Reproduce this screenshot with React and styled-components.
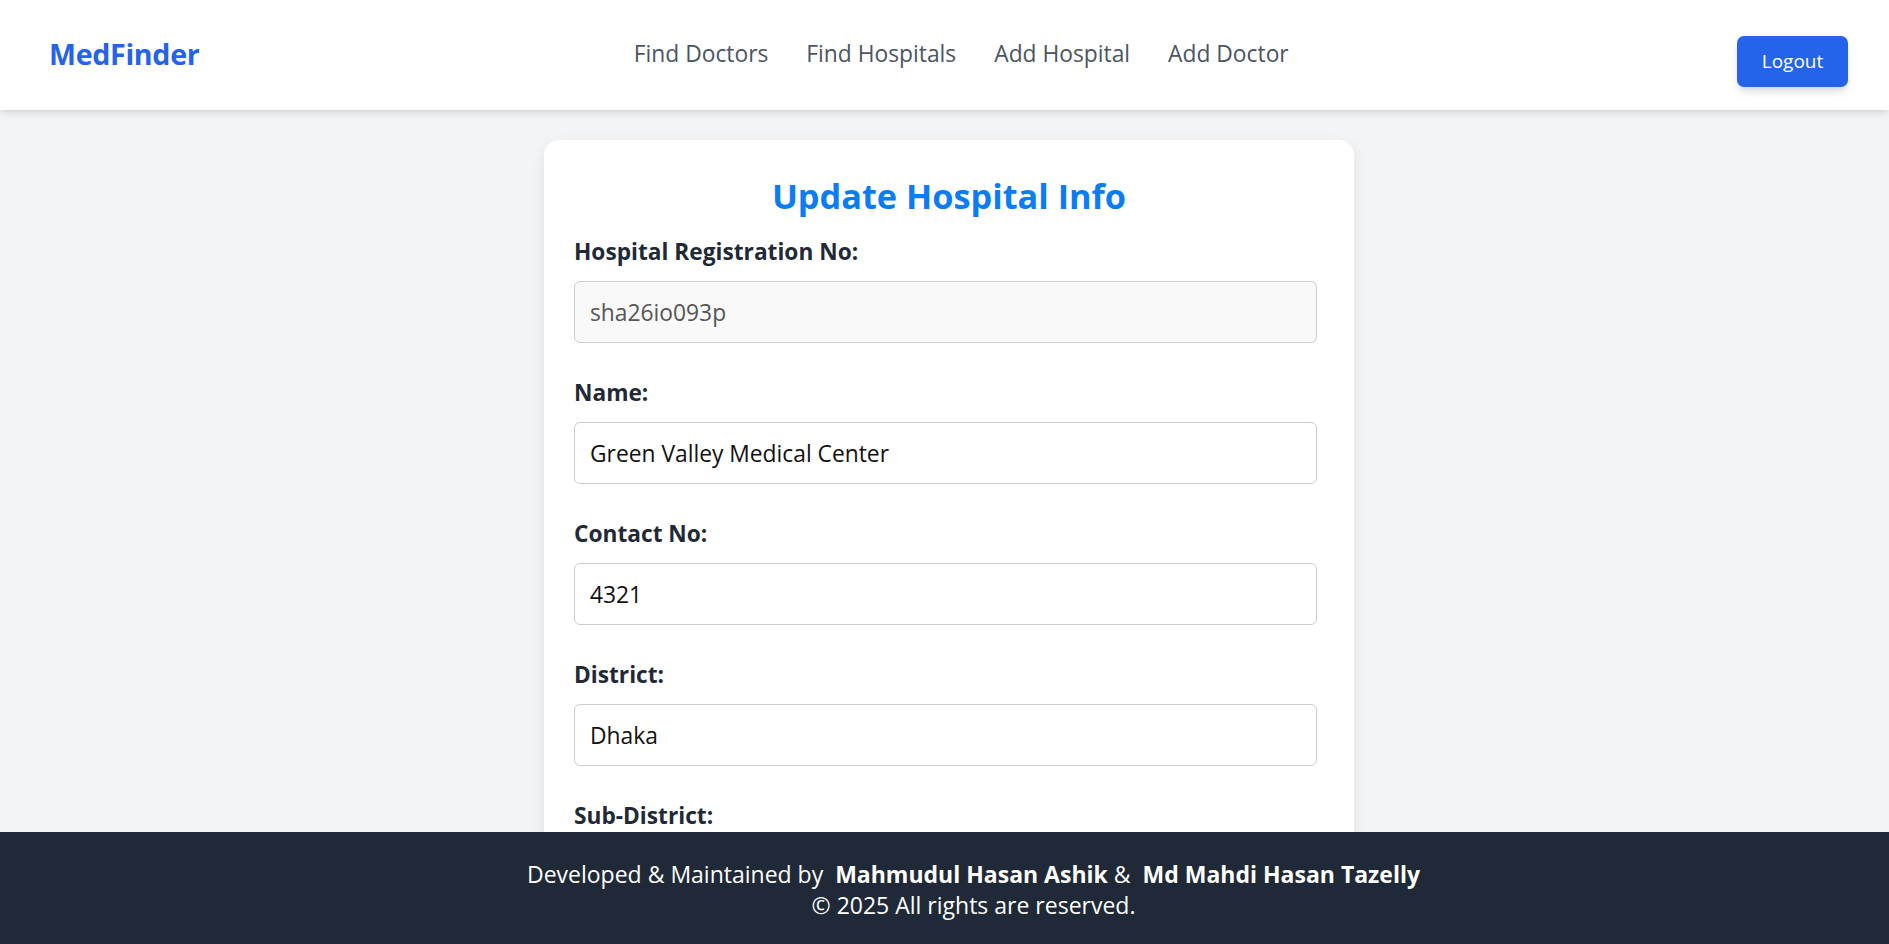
import React from "react";
import styled, { createGlobalStyle } from "styled-components";

const GlobalStyle = createGlobalStyle`
  *, *::before, *::after { box-sizing: border-box; }
  html, body { margin: 0; padding: 0; height: 100%; }
  body {
    font-family: "Open Sans", "Noto Sans", "Liberation Sans", sans-serif;
    background: #f3f4f6;
    color: #1f2937;
  }
  #root { height: 100%; }
`;

const Page = styled.div`
  height: 100vh;
  display: flex;
  flex-direction: column;
  overflow: hidden;
`;

const Header = styled.header`
  position: relative;
  z-index: 2;
  height: 110px;
  flex-shrink: 0;
  background: #ffffff;
  box-shadow: 0 4px 8px -1px rgba(0, 0, 0, 0.1), 0 2px 4px -2px rgba(0, 0, 0, 0.1);
  display: flex;
  align-items: center;
  justify-content: space-between;
  padding: 0 41px 3px 49px;
`;

const Logo = styled.div`
  font-size: 28.6px;
  font-weight: 700;
  color: #2563eb;
  letter-spacing: -0.3px;
`;

const Nav = styled.nav`
  display: flex;
  align-items: center;
  gap: 38px;
  margin-right: 14px;
`;

const NavLink = styled.a`
  font-size: 22.8px;
  color: #4b5563;
  text-decoration: none;
  cursor: pointer;
`;

const LogoutButton = styled.button`
  margin-top: 15px;
  width: 111px;
  height: 51px;
  border: none;
  border-radius: 7px;
  background: #2563eb;
  color: #ffffff;
  font-family: inherit;
  font-size: 19px;
  box-shadow: 0 6px 10px -2px rgba(0, 0, 0, 0.15), 0 2px 4px -2px rgba(0, 0, 0, 0.1);
  cursor: pointer;
`;

const Main = styled.main`
  flex: 1;
  min-height: 0;
  overflow: hidden;
  display: flex;
  justify-content: center;
  align-items: flex-start;
  padding: 30px 0 0 9px;
`;

const Card = styled.section`
  width: 810px;
  background: #ffffff;
  border-radius: 15px;
  box-shadow: 0 4px 14px rgba(0, 0, 0, 0.08);
  padding: 34px 37px 40px 30px;
  display: flex;
  flex-direction: column;
`;

const Title = styled.h1`
  margin: 0 0 23px;
  text-align: center;
  font-size: 34.3px;
  line-height: 43px;
  font-weight: 700;
  color: #0a7cf5;
  padding-left: 7px;
`;

const Field = styled.div`
  display: flex;
  flex-direction: column;
  margin-bottom: 38px;
`;

const Label = styled.label`
  font-size: 22.7px;
  line-height: 24px;
  font-weight: 700;
  color: #1f2937;
  margin-bottom: 17px;
`;

const Input = styled.input`
  width: 100%;
  height: 62px;
  padding: 0 15px;
  border: 1px solid #cccccc;
  border-radius: 6px;
  font-family: inherit;
  font-size: 22.8px;
  color: ${(p) => (p.readOnly ? "#555555" : "#111111")};
  background: ${(p) => (p.readOnly ? "#f9f9f9" : "#ffffff")};
  outline: none;
`;

const Footer = styled.footer`
  flex-shrink: 0;
  height: 112px;
  background: #1f2937;
  color: #ffffff;
  display: flex;
  flex-direction: column;
  align-items: center;
  justify-content: center;
  padding: 4px 0 0 58px;
  font-size: 23px;
  line-height: 31px;
  text-align: center;
`;

const Strong = styled.strong`
  font-weight: 700;
`;

const fields = [
  { label: "Hospital Registration No:", value: "sha26io093p", readOnly: true },
  { label: "Name:", value: "Green Valley Medical Center" },
  { label: "Contact No:", value: "4321" },
  { label: "District:", value: "Dhaka" },
  { label: "Sub-District:", value: "Dhanmondi" },
  { label: "Address:", value: "" },
];

export default function App() {
  return (
    <>
      <GlobalStyle />
      <Page>
        <Header>
          <Logo>MedFinder</Logo>
          <Nav>
            <NavLink>Find Doctors</NavLink>
            <NavLink>Find Hospitals</NavLink>
            <NavLink>Add Hospital</NavLink>
            <NavLink>Add Doctor</NavLink>
          </Nav>
          <LogoutButton>Logout</LogoutButton>
        </Header>
        <Main>
          <Card>
            <Title>Update Hospital Info</Title>
            {fields.map((f) => (
              <Field key={f.label}>
                <Label>{f.label}</Label>
                <Input defaultValue={f.value} readOnly={f.readOnly} />
              </Field>
            ))}
          </Card>
        </Main>
        <Footer>
          <div>
            Developed &amp; Maintained by&nbsp; <Strong>Mahmudul Hasan Ashik</Strong> &amp;&nbsp; <Strong>Md Mahdi Hasan Tazelly</Strong>
          </div>
          <div>© 2025 All rights are reserved.</div>
        </Footer>
      </Page>
    </>
  );
}
